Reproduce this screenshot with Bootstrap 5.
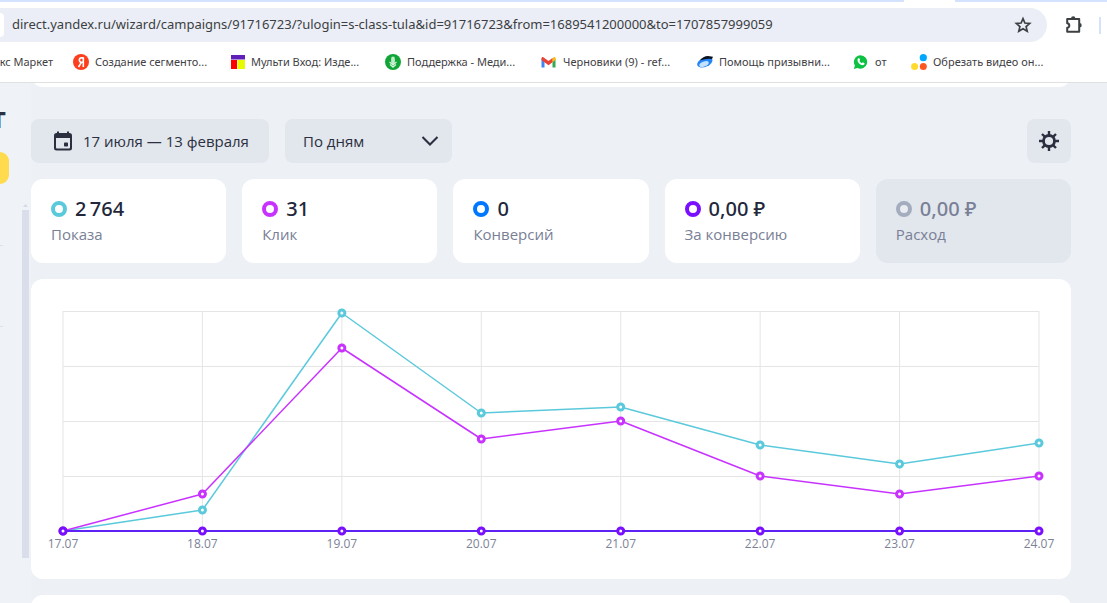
<!DOCTYPE html>
<html lang="ru">
<head>
<meta charset="utf-8">
<meta name="viewport" content="width=device-width, initial-scale=1">
<title>Статистика кампании</title>
<link href="https://cdn.jsdelivr.net/npm/bootstrap@5.3.0/dist/css/bootstrap.min.css" rel="stylesheet">
<style>
  body { font-family: "Open Sans", "Noto Sans", sans-serif; background: #edf0f5; color: #2b3040; }
  .tabstrip { height: 2px; background: #d3e3fd; }
  .tab-active { width: 51px; margin-right: 152px; background: #fff; }
  .browser { background: #fff; border-bottom: 1px solid #dfe1e0; font-family: "Noto Sans", "Open Sans", sans-serif; }
  .toolbar-row { padding-top: 6px; }
  .omnibox { height: 34px; background: #ebeef7; border-radius: 0 17px 17px 0; padding-right: 15px; }
  .site-info { width: 4px; height: 24px; background: #fff; border-radius: 0 12px 12px 0; }
  .omnibox input { font-size: 13px; color: #3c3e42; padding: 0 8px; }
  .omnibox input:focus { outline: none; }
  .bar-tools { width: 60px; padding-left: 17px; }
  .tool-sep { width: 2px; height: 17px; background: #d3e3fd; margin-right: 6px; }
  .bookmarks { height: 40px; font-size: 11px; }
  .bookmarks a { color: #3f4145; width: 156px; gap: 6px; flex: none; white-space: nowrap; }
  .bookmarks svg { flex: none; }
  .bookmarks .bm-first { width: 73px; padding-right: 20px; }
  .bookmarks .bm-short { width: 58px; }
  .side { width: 31px; background: #eff2f7; }
  .side-title { font-size: 28px; line-height: 32px; height: 32px; width: 6px; font-weight: 700; margin-top: 18px; }
  .side-add { width: 9px; height: 32px; background: #ffdb4d; border-radius: 0 10px 10px 0; margin-top: 19px; }
  .side-rule { width: 3px; height: 1px; background: #dde1e9; margin-top: 61px; }
  .side-rule + .side-rule { margin-top: 80px; }
  .scroll-col { width: 7px; margin-right: 2px; padding-top: 121px; }
  .scroll-thumb { height: 348px; background: #dadeea; margin-top: 2px; }
  .main { padding-right: 36px; }
  .panel { background: #fff; border-radius: 12px; }
  .panel-prev { height: 40px; margin-top: -36px; margin-bottom: 32px; }
  .panel-next { height: 60px; }
  .ctl { height: 44px; border: 0; border-radius: 8px; background-color: #e2e6ed; color: #2b3040; font-size: 15px; }
  .ctl-date { padding: 0 19px 0 22px; gap: 10px; width: 238px; white-space: nowrap; }
  .ctl-date svg { flex: none; }
  .ctl-select { width: 167px; padding: 0 44px 0 18px; background-position: right 13px center; background-size: 18px 12px;
    background-image: url("data:image/svg+xml,%3Csvg xmlns='http://www.w3.org/2000/svg' viewBox='0 0 18 12'%3E%3Cpath d='M1.5 2 9 9.5 16.5 2' fill='none' stroke='%232b3040' stroke-width='2.1'/%3E%3C/svg%3E"); }
  .ctl-gear { width: 44px; }
  .metric { height: 84px; border: 0; border-radius: 12px; background: #fff; padding: 0 20px; text-align: left; color: #22273a; flex: 1 1 0; min-width: 0; }
  .metric-value { font-family: "Noto Sans", "Open Sans", sans-serif; font-size: 20px; line-height: 24px; font-weight: 500; gap: 8px; }
  .metric-name { display: block; font-size: 15px; line-height: 24px; margin-top: 1px; color: #798096; }
  .ring { width: 16px; height: 16px; border-radius: 50%; border: 4px solid; background: #fff; }
  .metric-off, .metric-off .metric-value { color: #798096; }
  .metric-off { background: #e2e6ed; }
  .metric-off .ring { background: #e9ecf1; }
  .chart-box { padding: 32px 32px 28px; }
  .chart { width: 100%; height: 240px; overflow: visible; display: block; }
  .chart text { font-size: 12px; fill: #7c8296; text-anchor: middle; }
</style>
</head>
<body class="vh-100 overflow-hidden d-flex flex-column">
<header class="browser flex-shrink-0">
  <div class="tabstrip d-flex justify-content-end"><div class="tab-active"></div></div>
  <div class="toolbar-row d-flex align-items-center">
    <div class="omnibox d-flex align-items-center flex-grow-1">
      <span class="site-info"></span>
      <input class="border-0 bg-transparent flex-grow-1" type="text" aria-label="Адрес" value="direct.yandex.ru/wizard/campaigns/91716723/?ulogin=s-class-tula&amp;id=91716723&amp;from=1689541200000&amp;to=1707857999059">
      <button class="btn p-0 border-0 d-flex" aria-label="Добавить в закладки">
        <svg width="18" height="18" viewBox="0 0 18 18" fill="none" stroke="#3c4043" stroke-width="1.7"><path d="M9 2.6 10.9 7l4.800.400-3.600 3.200 1.100 4.600L9 12.700l-4.200 2.500 1.100-4.600L2.300 7.400 7.100 7z"/></svg>
      </button>
    </div>
    <div class="bar-tools d-flex align-items-center justify-content-between">
      <button class="btn p-0 border-0 d-flex" aria-label="Расширения">
        <svg width="20" height="20" viewBox="0 0 20 20"><path d="M4.300 4H15.200V16.800H3.200V12.800C6 12.600 6 8.500 3.200 8.200V4z" fill="none" stroke="#3c4043" stroke-width="2" stroke-linejoin="round"/><path d="M7 3.500a2.200 2.200 0 0 1 4.400 0zM15.500 8a2.200 2.200 0 0 1 0 4.400z" fill="#3c4043"/></svg>
      </button>
      <span class="tool-sep"></span>
    </div>
  </div>
  <nav class="bookmarks d-flex align-items-center overflow-hidden" aria-label="Закладки">
    <a href="#" class="bm-first d-flex justify-content-end text-decoration-none">кс Маркет</a>
    <a href="#" class="d-flex align-items-center text-decoration-none">
      <svg width="16" height="16" viewBox="0 0 16 16"><circle cx="8" cy="8" r="8" fill="#fc3f1d"/><path d="M10.300 3.200V13M10.300 3.900H8.600C5.600 3.900 5.600 8.300 8.600 8.300H10.300M8.400 8.300 5.500 13" fill="none" stroke="#fff" stroke-width="1.600"/></svg>Создание сегменто...</a>
    <a href="#" class="d-flex align-items-center text-decoration-none">
      <svg width="16" height="16" viewBox="0 0 16 16"><path d="M2 1h14v4.500H2z" fill="#6020b8"/><path d="M2 6h6v9H2z" fill="#f00"/><path d="M8.500 6H16v9H8.500z" fill="#e6fa00"/></svg>Мульти Вход: Изде...</a>
    <a href="#" class="d-flex align-items-center text-decoration-none">
      <svg width="16" height="16" viewBox="0 0 16 16"><circle cx="8" cy="8" r="8" fill="#10a637"/><rect x="6" y="2.500" width="4" height="7.500" rx="2" fill="#a9e3b6"/><path d="M4.500 8 8 11l3.500-3M5 10.500l3 2.700 3-2.700M8 3v11" fill="none" stroke="#d8f3de" stroke-width="1.100"/></svg>Поддержка - Меди...</a>
    <a href="#" class="d-flex align-items-center text-decoration-none">
      <svg width="16" height="16" viewBox="0 0 16 16"><path d="M.5 4.500V13.500h3V7z" fill="#4285f4"/><path d="M14.500 4.500V13.500h-3V7z" fill="#34a853"/><path d="M11.500 4.200 13 3q1.500-.5 1.500 1.500V6l-3 2.300z" fill="#fbbc04"/><path d="M.5 6V4.500Q.5 2.500 2 3l5.500 4L11.500 4v4.300l-4 3L3.500 8.300z" fill="#ea4335"/></svg>Черновики (9) - ref...</a>
    <a href="#" class="d-flex align-items-center text-decoration-none">
      <svg width="16" height="16" viewBox="0 0 16 16"><ellipse cx="7.800" cy="8.300" rx="8" ry="4.600" transform="rotate(-22 7.800 8.300)" fill="#2584f5"/><path d="M3 6.500Q6 2 11 2l5 .7-1 2.300Q10 4 3 6.500z" fill="#0b1420"/><ellipse cx="7" cy="10" rx="5" ry="2.400" transform="rotate(-22 7 10)" fill="#c4e2fd"/></svg>Помощь призывни...</a>
    <a href="#" class="bm-short d-flex align-items-center text-decoration-none">
      <svg width="16" height="16" viewBox="0 0 16 16"><path d="M7.500 1.300a6.700 6.700 0 1 1-3 12.700L.8 14.900 1.900 11.500A6.700 6.700 0 0 1 7.500 1.300z" fill="#0dc143"/><path d="M5 4.500q1.200-1 1.600.3l.5 1.300-.7.900q.8 1.500 2.500 2.200l.9-.9 1.700.9q.4 1.200-1 1.800C7.500 12 3 7.500 5 4.500z" fill="#fff"/></svg>от</a>
    <a href="#" class="d-flex align-items-center text-decoration-none">
      <svg width="16" height="16" viewBox="0 0 16 16"><circle cx="12.300" cy="3.700" r="3.600" fill="#00a8ff"/><circle cx="3.600" cy="12.500" r="3.500" fill="#ffdb2d"/><circle cx="12.300" cy="12.500" r="3.500" fill="#ff5722"/></svg>Обрезать видео он...</a>
  </nav>
</header>

<div class="d-flex flex-grow-1 overflow-hidden">
  <aside class="side d-flex justify-content-between flex-shrink-0">
    <div>
      <div class="side-title d-flex justify-content-end">т</div>
      <div class="side-add"></div>
      <div class="side-rule"></div>
      <div class="side-rule"></div>
    </div>
    <div class="scroll-col">
      <svg class="d-block mx-auto" width="5" height="4" viewBox="0 0 5 4"><path d="M0 3 2.500 0 5 3z" fill="#d5d9e6"/></svg>
      <div class="scroll-thumb"></div>
    </div>
  </aside>
  <main class="main flex-grow-1 d-flex flex-column overflow-hidden">
    <div class="panel panel-prev flex-shrink-0"></div>
    <div class="d-flex gap-3 mb-3 flex-shrink-0">
      <button class="ctl ctl-date d-flex align-items-center">
        <svg width="20" height="20" viewBox="0 0 20 20"><path fill-rule="evenodd" d="M4 .5h2V2h8V.5h2V2h.5Q19 2 19 4.500V17q0 2.500-2.500 2.500h-13Q1 19.500 1 17V4.500Q1 2 3.500 2H4zM3 7v9.500q0 1 1 1h12q1 0 1-1V7z" fill="#2b3040"/><rect x="11" y="11.500" width="4" height="4" rx=".8" fill="#2b3040"/></svg>
        <span>17 июля — 13 февраля</span>
      </button>
      <select class="form-select ctl ctl-select" aria-label="Группировка"><option>По дням</option><option>По неделям</option></select>
      <button class="ctl ctl-gear p-0 ms-auto d-flex align-items-center justify-content-center" aria-label="Настройки">
        <svg width="20" height="20" viewBox="0 0 20 20" fill="none" stroke="#2b3040"><circle cx="10" cy="10" r="5.500" stroke-width="2.800"/><path d="M10 0v4M10 16v4M0 10h4M16 10h4M3 3l2.700 2.700M14.300 14.300 17 17M3 17l2.700-2.700M14.300 5.700 17 3" stroke-width="2.400"/></svg>
      </button>
    </div>
    <div class="d-flex gap-3 mb-3 flex-shrink-0">
      <button class="metric"><span class="metric-value d-flex align-items-center"><span class="ring" style="border-color:#5bc9dc"></span>2&#8201;764</span><span class="metric-name">Показа</span></button>
      <button class="metric"><span class="metric-value d-flex align-items-center"><span class="ring" style="border-color:#c832ff"></span>31</span><span class="metric-name">Клик</span></button>
      <button class="metric"><span class="metric-value d-flex align-items-center"><span class="ring" style="border-color:#0077ff"></span>0</span><span class="metric-name">Конверсий</span></button>
      <button class="metric"><span class="metric-value d-flex align-items-center"><span class="ring" style="border-color:#7a0fff"></span>0,00 ₽</span><span class="metric-name">За конверсию</span></button>
      <button class="metric metric-off"><span class="metric-value d-flex align-items-center"><span class="ring" style="border-color:#a3adbe"></span>0,00 ₽</span><span class="metric-name">Расход</span></button>
    </div>
    <section class="panel chart-box mb-3 flex-shrink-0">
      <svg class="chart" id="chart" role="img" aria-label="Статистика по дням"></svg>
    </section>
    <div class="panel panel-next flex-shrink-0"></div>
  </main>
</div>
<script src="https://cdn.jsdelivr.net/npm/bootstrap@5.3.0/dist/js/bootstrap.bundle.min.js"></script>
<script>
  const days = ['17.07', '18.07', '19.07', '20.07', '21.07', '22.07', '23.07', '24.07'];
  // Heights above the baseline; the plot is 220 high
  const series = [
    { color: '#5bc9dc', width: 1.5, points: [0, 21, 218, 118, 124, 86, 67, 88] },
    { color: '#c832ff', width: 1.5, points: [0, 37, 183, 92, 110, 55, 37, 55] },
    { color: '#5f22f5', dot: '#7a0fff', width: 2, points: [0, 0, 0, 0, 0, 0, 0, 0] }
  ];
  const H = 220, x = i => (i * 100 / (days.length - 1)) + '%';
  let out = '';
  for (let r = 0; r < 4; r++) out += `<line x1="0" x2="100%" y1="${r * 55 + .5}" y2="${r * 55 + .5}" stroke="#e5e5e5"/>`;
  days.forEach((d, i) => {
    out += `<line x1="${x(i)}" x2="${x(i)}" y1="0" y2="${H}" stroke="#e5e5e5"/>`;
    out += `<text x="${x(i)}" y="237">${d}</text>`;
  });
  for (const s of series) {
    s.points.slice(1).forEach((p, i) => {
      out += `<line x1="${x(i)}" y1="${H - s.points[i]}" x2="${x(i + 1)}" y2="${H - p}" stroke="${s.color}" stroke-width="${s.width}"/>`;
    });
    s.points.forEach((p, i) => {
      out += `<circle cx="${x(i)}" cy="${H - p}" r="3" fill="#fff" stroke="${s.dot || s.color}" stroke-width="3"/>`;
    });
  }
  document.getElementById('chart').innerHTML = out;
</script>
</body>
</html>
